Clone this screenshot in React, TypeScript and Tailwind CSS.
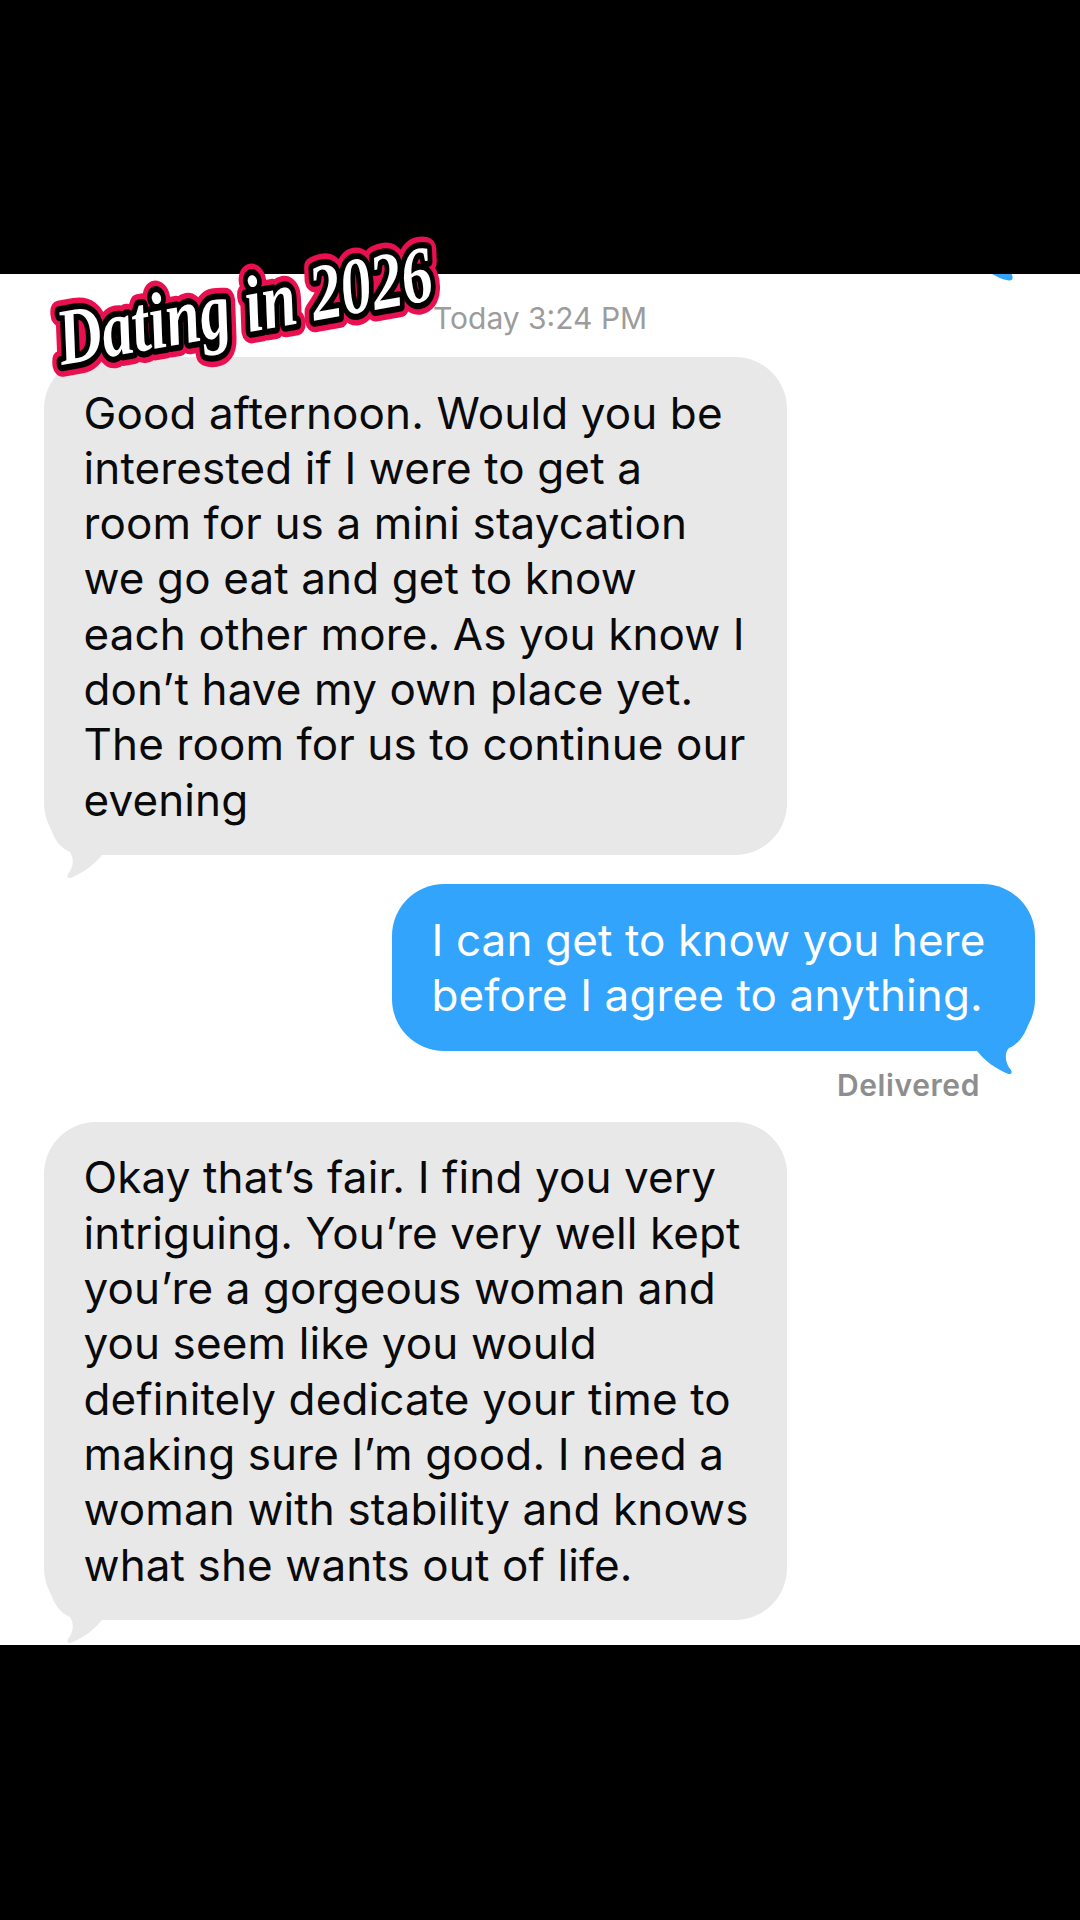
const first = ["Good afternoon. Would you be","interested if I were to get a","room for us a mini staycation","we go eat and get to know","each other more. As you know I","don’t have my own place yet.","The room for us to continue our","evening"];
const second = ["I can get to know you here","before I agree to anything."];
const third = ["Okay that’s fair. I find you very","intriguing. You’re very well kept","you’re a gorgeous woman and","you seem like you would","definitely dedicate your time to","making sure I’m good. I need a","woman with stability and knows","what she wants out of life."];

function Lines({ lines }: { lines: string[] }) {
  return <>{lines.map((l) => <div key={l} className="whitespace-nowrap">{l}</div>)}</>;
}

function LeftTail() {
  return (
    <svg className="absolute left-0 bottom-[-24px]" width="70" height="70" viewBox="0 0 70 70">
      <path d="M4 2 C5 24 14 38 26 43 C30 49 30 58 24 65 C22 69 25 70 29 68 C40 63 50 56 58 46 L62 20 Z" fill="#e8e8e9" />
    </svg>
  );
}

function Received({ lines, className }: { lines: string[]; className: string }) {
  return (
    <div className={`relative w-[743px] ${className}`}>
      <LeftTail />
      <div className="relative rounded-[52px] bg-[#e8e8e9] pl-[39.5px] pt-[28.5px] pb-[27.5px] text-[44px] leading-[55.3px] tracking-[0.12px] text-[#0a0a0a]">
        <Lines lines={lines} />
      </div>
    </div>
  );
}

function Sticker() {
  const label = "Dating in 2026";
  const common = {
    x: 0,
    y: 0,
    fontFamily: "'Liberation Serif', serif",
    fontStyle: "italic",
    fontWeight: 700,
    fontSize: 80,
    strokeLinejoin: "round" as const,
    strokeLinecap: "round" as const,
    vectorEffect: "non-scaling-stroke" as const,
  };
  return (
    <svg className="absolute left-[36px] top-[206px]" width="420" height="200" viewBox="0 0 420 200">
      <g transform="translate(26 159) rotate(-10) scale(0.77 1)">
        <text aria-hidden="true" {...common} fill="#e8104f" stroke="#e8104f" strokeWidth="21">{label}</text>
        <text aria-hidden="true" {...common} fill="#000000" stroke="#000000" strokeWidth="11">{label}</text>
        <text {...common} fill="#ffffff">{label}</text>
      </g>
    </svg>
  );
}

export default function App() {
  return (
    <div className="relative flex h-[1920px] w-[1080px] flex-col overflow-hidden bg-black font-['Inter',sans-serif]">
      <div className="h-[274px] shrink-0" />
      <main className="relative h-[1371px] shrink-0 overflow-hidden bg-white pl-[44px] pr-[45px]">
        <svg className="absolute right-[66px] top-0" width="22" height="7" viewBox="0 0 26 8">
          <path d="M0 0 C6 3 12 7 20 7.500 C24 8 26 5 23 0 Z" fill="#32a4fb" />
        </svg>
        <div className="pt-[25px] pl-[389px] text-[30px] leading-[38px] text-[#9c9c9c]">Today 3:24 PM</div>
        <Received lines={first} className="mt-[20px]" />
        <div className="relative ml-[348px] mt-[29px] w-[643px]">
          <svg className="absolute right-0 bottom-[-24px]" width="70" height="70" viewBox="0 0 70 70">
            <path d="M66 2 C65 24 56 38 44 43 C39 48 40 58 46 65 C48 69 45 70 41 68 C30 63 20 56 12 46 L8 20 Z" fill="#32a4fb" />
          </svg>
          <div className="relative rounded-[52px] bg-[#32a4fb] pl-[39.5px] pt-[28.5px] pb-[27.5px] text-[44px] leading-[55.3px] tracking-[0.12px] text-white">
            <Lines lines={second} />
          </div>
        </div>
        <div className="mt-[16px] pl-[793px] text-[30px] font-semibold leading-[36px] tracking-[0.6px] text-[#8e8e8e]">Delivered</div>
        <Received lines={third} className="mt-[19px]" />
      </main>
      <div className="flex-1" />
      <Sticker />
    </div>
  );
}
